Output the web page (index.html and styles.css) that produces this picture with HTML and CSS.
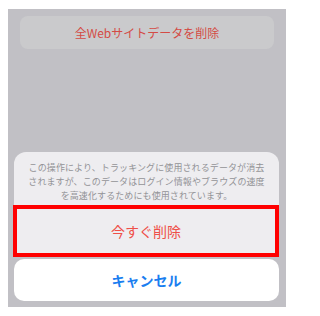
FILE: index.html
```html
<!DOCTYPE html>
<html lang="ja">
<head>
<meta charset="utf-8">
<link rel="stylesheet" href="styles.css">
</head>
<body>
<div class="screen">
  <div class="top-btn">全Webサイトデータを削除</div>
  <div class="spacer"></div>
  <div class="sheet">
    <div class="group">
      <div class="message">この操作により、トラッキングに使用されるデータが消去<br>されますが、このデータはログイン情報やブラウズの速度<br>を高速化するためにも使用されています。</div>
      <div class="destructive">今すぐ削除</div>
    </div>
    <div class="cancel">キャンセル</div>
  </div>
</div>
</body>
</html>
```
FILE: styles.css
```css
html, body {
  margin: 0;
  background: #ffffff;
}
body {
  padding: 9px 10px 9px 8px;
  font-family: "Noto Sans CJK JP", "Noto Sans", sans-serif;
}
.screen {
  width: 278px;
  height: 298px;
  background: #c1c0c5;
  display: flex;
  flex-direction: column;
  padding: 7px 0 6px;
  box-sizing: border-box;
}
.top-btn {
  margin: 0 12px;
  height: 33px;
  border-radius: 8px;
  background: #cacacc;
  color: #d44b45;
  font-size: 12px;
  display: flex;
  align-items: center;
  justify-content: center;
}
.spacer {
  flex: 1;
}
.sheet {
  margin: 0 7px 0 6px;
  display: flex;
  flex-direction: column;
  gap: 2px;
}
.group {
  background: #eeedf0;
  border-radius: 12px 12px 0 0;
}
.message {
  padding: 9px 0 2px;
  height: 42px;
  box-sizing: content-box;
  text-align: center;
  white-space: nowrap;
  font-size: 9px;
  letter-spacing: 0.1px;
  line-height: 14px;
  color: #939397;
}
.destructive {
  margin-left: -1px;
  height: 52px;
  box-sizing: border-box;
  border: 4px solid #ff0000;
  display: flex;
  align-items: center;
  justify-content: center;
  color: #ef5049;
  font-size: 14px;
  background: #eeedf0;
}
.cancel {
  height: 42px;
  border-radius: 10px;
  background: #ffffff;
  display: flex;
  align-items: center;
  justify-content: center;
  color: #1a7ef0;
  font-size: 14px;
  font-weight: bold;
}
```
